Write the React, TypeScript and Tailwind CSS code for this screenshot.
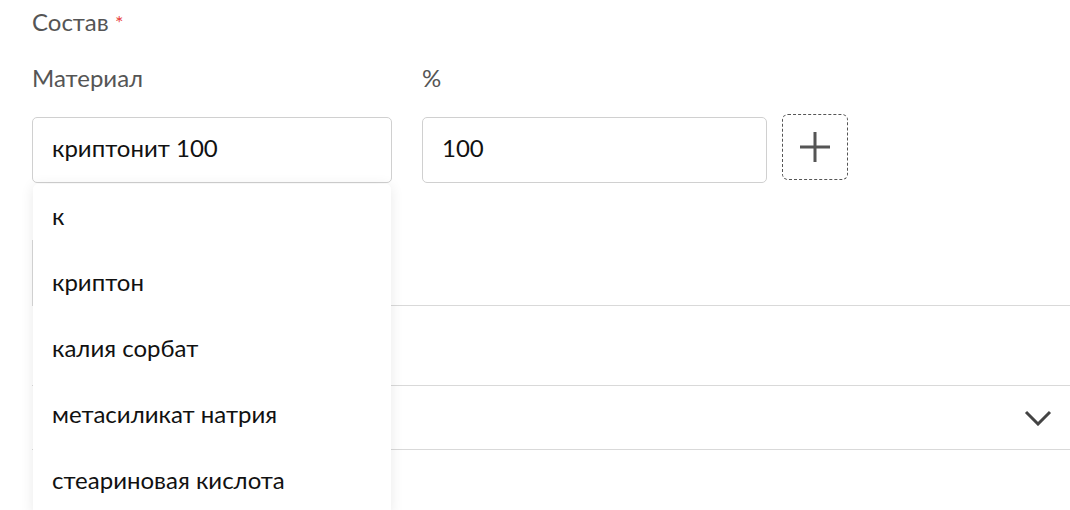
import React from 'react';

const options = ['к', 'криптон', 'калия сорбат', 'метасиликат натрия', 'стеариновая кислота'];

export default function App() {
  return (
    <div className="relative w-[1070px] h-[510px] overflow-hidden bg-white font-['Lato',sans-serif]">
      <div className="pl-[32px]">
        {/* Section title */}
        <div className="pt-[6px] text-[24px] leading-[32px] text-[#555]">
          Состав <span className="text-[#e8423f] text-[20px] align-top">*</span>
        </div>

        {/* Composition row */}
        <div className="relative mt-[24px] flex items-start">
          <div className="w-[360px] flex flex-col">
            <label className="text-[24px] leading-[32px] text-[#555]">Материал</label>
            <div className="mt-[23px] h-[66px] rounded-[5px] border border-[#d0d0d0] flex items-center px-[19px] pb-[4px] text-[24px] text-[#111]">
              криптонит 100
            </div>
          </div>
          <div className="ml-[30px] w-[345px] flex flex-col">
            <label className="text-[24px] leading-[32px] text-[#555]">%</label>
            <div className="mt-[23px] h-[66px] rounded-[5px] border border-[#d0d0d0] flex items-center px-[19px] pb-[4px] text-[24px] text-[#111]">
              100
            </div>
          </div>
          <button className="ml-[15px] mt-[52px] w-[66px] h-[66px] rounded-[6px] border border-dashed border-[#555] flex items-center justify-center">
            <svg width="34" height="34" viewBox="0 0 34 34" fill="none" stroke="#555" strokeWidth="3">
              <path d="M17 2v30M2 17h30" />
            </svg>
          </button>

          {/* Autocomplete menu */}
          <div className="absolute left-[1px] top-[122px] z-10 w-[358px] bg-white rounded-[5px] shadow-[0_2px_14px_rgba(0,0,0,0.09)]">
            {options.map((o) => (
              <div key={o} className="h-[66px] flex items-center px-[19px] pb-[2px] text-[24px] text-[#111]">
                {o}
              </div>
            ))}
          </div>
        </div>

        {/* Fields behind the menu */}
        <div className="mt-[57px] h-[66px] border-l border-b border-[#d9d9d9]" />
        <div className="h-[80px] border-b border-[#d9d9d9]" />
        <div className="h-[64px] border-b border-[#d9d9d9] flex items-center justify-end pr-[18px]">
          <svg width="28" height="16" viewBox="0 0 28 16" fill="none" stroke="#444" strokeWidth="3">
            <path d="M2 2l12 12L26 2" />
          </svg>
        </div>
      </div>
    </div>
  );
}
